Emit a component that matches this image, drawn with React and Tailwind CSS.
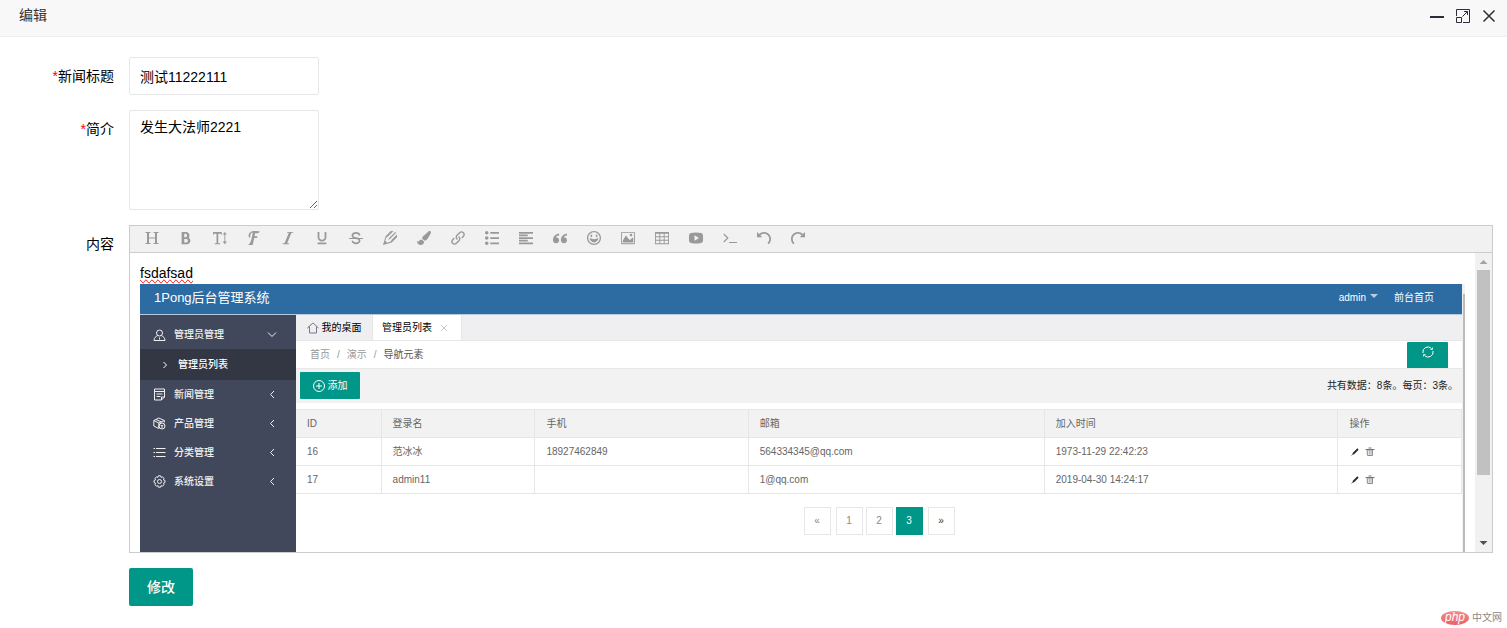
// Edit dialog for a news item: title, summary and rich text content

import { useState } from 'react';
import { FaPaintBrush } from 'react-icons/fa';
import {
  ImBold,
  ImFont,
  ImHappy,
  ImImage,
  ImItalic,
  ImLink,
  ImList2,
  ImParagraphLeft,
  ImPencil2,
  ImQuotesLeft,
  ImRedo,
  ImStrikethrough,
  ImTable2,
  ImTextHeight,
  ImUnderline,
  ImUndo,
} from 'react-icons/im';

// Base wrapper for the thin outline icons
const Icon = ({ size = 14, children, className, strokeWidth = 1, viewBox }) => (
  <svg
    width={size}
    height={size}
    viewBox={viewBox || `0 0 ${size} ${size}`}
    fill="none"
    stroke="currentColor"
    strokeWidth={strokeWidth}
    className={className}
    aria-hidden="true"
  >
    {children}
  </svg>
);

const MinimizeIcon = () => (
  <Icon strokeWidth={2}>
    <path d="M0 8h14" />
  </Icon>
);

const MaximizeIcon = () => (
  <Icon>
    <path d="M0.5 7V0.5H13.5V13.5H7" />
    <path d="M0.5 8.5h5v5h-5zM6.5 7.5l5-5M8 2.5h3.5V6" />
  </Icon>
);

const CloseIcon = () => (
  <Icon strokeWidth={1.5}>
    <path d="M1.5 1.5l11 11M12.5 1.5l-11 11" />
  </Icon>
);

const HeaderIcon = () => (
  <Icon strokeWidth={1}>
    <path d="M0.5 1.5h5M8.5 1.5h5M0.5 12.5h5M8.5 12.5h5M3 7h8" />
    <path d="M3 1.5v11M11 1.5v11" strokeWidth={2} />
  </Icon>
);

const VideoIcon = () => (
  <Icon>
    <path
      d="M2 2Q7 1 12 2Q14 2.2 14 4.5V9.5Q14 11.8 12 12Q7 13 2 12Q0 11.8 0 9.5V4.5Q0 2.2 2 2zM5.5 4.2v5.6L10 7z"
      fill="currentColor"
      fillRule="evenodd"
      stroke="none"
    />
  </Icon>
);

const TerminalIcon = () => (
  <Icon>
    <path d="M0.8 3l4 4-4 4M6 11.5h8" strokeWidth={1.2} />
  </Icon>
);

const UserIcon = () => (
  <Icon size={13}>
    <circle cx="6.5" cy="4" r="3" />
    <path d="M4.8 6.5C2.5 7.5 1 9 1 11.5h11C12 9 10.5 7.5 8.2 6.5M6.5 8.500v2" />
  </Icon>
);

const NewsIcon = () => (
  <Icon size={13}>
    <path d="M1.5 1h10v8l-3 3h-7zM1.5 3.5h10M3.5 6h6M3.5 8.5h4M8.5 12V9h3" />
  </Icon>
);

const ProductIcon = () => (
  <Icon size={13}>
    <path d="M0.8 3.5l5-2.5 5.5 2.5v2M0.8 3.5l5 2.5 5.5-2.5M0.8 3.5v5.5l5 2.5V6M3 2.5l5.5 2.5" />
    <circle cx="9" cy="9" r="3" />
    <path d="M7.5 8l1.5 1 1.5-1M9 9v2" />
  </Icon>
);

const CategoryIcon = () => (
  <Icon size={13}>
    <path d="M0.5 2.5h1.5M3 2.5h9.5M0.5 6.5h1.5M3 6.5h9.5M0.5 10.5h1.5M3 10.5h9.5" />
  </Icon>
);

const SettingsIcon = () => (
  <Icon size={13}>
    <circle cx="6.5" cy="6.5" r="2" />
    <path d="M5.5 0.8h2l0.5 1.5 1.5-0.5 1.5 1.5-0.6 1.5 1.6 0.7v2l-1.6 0.7 0.6 1.5-1.5 1.5-1.5-0.5-0.5 1.5h-2L5 10.7l-1.5 0.5L2 9.7l0.6-1.5L1 7.5v-2l1.6-0.7L2 3.3l1.5-1.5 1.5 0.5z" />
  </Icon>
);

const HomeIcon = () => (
  <Icon size={12}>
    <path d="M0.5 6L6 1l5.5 5M2.5 4.5v6.500h7V4.5" stroke="#77778f" />
    <path d="M0.5 6L6 1" stroke="#c77b7b" />
  </Icon>
);

const AddIcon = () => (
  <Icon size={12}>
    <circle cx="6" cy="6" r="5.5" />
    <path d="M6 3v6M3 6h6" />
  </Icon>
);

const RefreshIcon = () => (
  <Icon size={12}>
    <path d="M1 7A5 5 0 0 1 9.5 2.5M11 5a5 5 0 0 1-8.500 4.500" />
    <path d="M8.5 3.500h2V1.500M3.500 8.500h-2V10.500" strokeWidth={0.8} />
  </Icon>
);

const PencilIcon = () => (
  <Icon size={10} strokeWidth={1.8}>
    <path d="M3 7L8 2" stroke="#222a44" />
    <path d="M1.5 8.5L3 7" stroke="#9a6a50" strokeWidth={1} />
  </Icon>
);

const TrashIcon = () => (
  <Icon size={10}>
    <path d="M2.5 3h5v5.5h-5z" fill="#dbe9f3" stroke="#8d8d8d" />
    <path d="M0.5 2.5h9M3.5 1h3" stroke="#77776f" />
    <path d="M4.5 4v3.5M6 4v3.5" stroke="#8fa9bc" strokeWidth={0.7} />
    <path d="M2 3v5" stroke="#d8bd84" strokeWidth={0.8} />
  </Icon>
);

const ChevronIcon = ({ d }) => (
  <Icon size={10}>
    <path d={d} />
  </Icon>
);

const CHEVRON_DOWN = 'M1 2.5l4 4 4-4';
const CHEVRON_LEFT = 'M7 1L3.500 4.500L7 8';
const CHEVRON_RIGHT = 'M3.5 2l3 3-3 3';

const TOOLS = [
  { name: '标题', Glyph: HeaderIcon },
  { name: '粗体', Glyph: ImBold },
  { name: '字号', Glyph: ImTextHeight },
  { name: '字体', Glyph: ImFont },
  { name: '斜体', Glyph: ImItalic },
  { name: '下划线', Glyph: ImUnderline },
  { name: '删除线', Glyph: ImStrikethrough },
  { name: '文字颜色', Glyph: ImPencil2 },
  { name: '背景色', Glyph: FaPaintBrush },
  { name: '链接', Glyph: ImLink },
  { name: '列表', Glyph: ImList2 },
  { name: '对齐', Glyph: ImParagraphLeft },
  { name: '引用', Glyph: ImQuotesLeft },
  { name: '表情', Glyph: ImHappy },
  { name: '图片', Glyph: ImImage },
  { name: '表格', Glyph: ImTable2 },
  { name: '视频', Glyph: VideoIcon },
  { name: '代码', Glyph: TerminalIcon },
  { name: '撤销', Glyph: ImUndo },
  { name: '重做', Glyph: ImRedo },
];

const MENU = [
  { label: '新闻管理', Glyph: NewsIcon },
  { label: '产品管理', Glyph: ProductIcon },
  { label: '分类管理', Glyph: CategoryIcon },
  { label: '系统设置', Glyph: SettingsIcon },
];

const COLUMNS = [
  { label: 'ID', width: 'w-[7.3%]' },
  { label: '登录名', width: 'w-[13.2%]' },
  { label: '手机', width: 'w-[18.3%]' },
  { label: '邮箱', width: 'w-[25.4%]' },
  { label: '加入时间', width: 'w-[25.2%]' },
  { label: '操作', width: '' },
];

const ROWS = [
  ['16', '范冰冰', '18927462849', '564334345@qq.com', '1973-11-29 22:42:23'],
  ['17', 'admin11', '', '1@qq.com', '2019-04-30 14:24:17'],
];

const TitleBar = () => (
  <header className="flex h-[37px] items-start justify-between border-b border-[#eeeeee] bg-[#f8f8f8] pr-[11px] pl-[19px] text-[#333333]">
    <h1 className="pt-[5px] leading-5">编辑</h1>
    <div className="flex gap-3 pt-[9px] text-[#2d2c3b]">
      <button type="button" aria-label="最小化"><MinimizeIcon /></button>
      <button type="button" aria-label="最大化"><MaximizeIcon /></button>
      <button type="button" aria-label="关闭"><CloseIcon /></button>
    </div>
  </header>
);

const FormRow = ({ id, label, required, children }) => (
  <div className="flex items-start gap-[15px]">
    <label htmlFor={id} className="w-[114px] shrink-0 py-[9px] text-right leading-5">
      {required && <span className="text-[#ff0000]">*</span>}
      {label}
    </label>
    {children}
  </div>
);

const Toolbar = () => (
  <div className="flex h-[27px] border-b border-[#cccccc] bg-[#f1f1f1] pb-[2px] pl-[5px] text-[#999999]">
    {TOOLS.map(({ name, Glyph }) => (
      <button
        key={name}
        type="button"
        aria-label={name}
        className="flex w-[34px] items-center justify-center text-sm"
      >
        <Glyph />
      </button>
    ))}
  </div>
);

const Sidebar = () => (
  <nav className="w-[156px] shrink-0 bg-[#42485b] font-medium text-white">
    <button type="button" className="flex h-[34px] w-full items-center pt-[6px] pr-[19px] pl-[13px] text-[#f0f0f0]">
      <UserIcon />
      <span className="ml-2 grow text-left">管理员管理</span>
      <ChevronIcon d={CHEVRON_DOWN} />
    </button>
    <a href="#list" className="flex h-[31px] items-center gap-2 bg-[#333744] pl-5">
      <ChevronIcon d={CHEVRON_RIGHT} />
      管理员列表
    </a>
    {MENU.map(({ label, Glyph }) => (
      <button key={label} type="button" className="flex h-[29px] w-full items-center pr-[19px] pl-[13px] text-[#f0f0f0]">
        <Glyph />
        <span className="ml-2 grow text-left">{label}</span>
        <ChevronIcon d={CHEVRON_LEFT} />
      </button>
    ))}
  </nav>
);

const AdminTable = () => (
  <table className="w-full table-fixed border-collapse text-left text-[#666666]">
    <thead className="bg-[#f2f2f2]">
      <tr className="h-7">
        {COLUMNS.map(col => (
          <th
            key={col.label}
            className={`border border-l-0 border-[#e6e6e6] px-[11px] font-normal ${col.width}`}
          >
            {col.label}
          </th>
        ))}
      </tr>
    </thead>
    <tbody>
      {ROWS.map(row => (
        <tr key={row[0]} className="h-7">
          {row.map((cell, i) => (
            <td key={i} className="border border-l-0 border-[#e6e6e6] px-[11px]">{cell}</td>
          ))}
          <td className="border border-l-0 border-[#e6e6e6] px-[12px]">
            <div className="flex gap-[5px]">
              <button type="button" aria-label="编辑"><PencilIcon /></button>
              <button type="button" aria-label="删除"><TrashIcon /></button>
            </div>
          </td>
        </tr>
      ))}
    </tbody>
  </table>
);

const Pagination = () => (
  <div className="mt-[13px] flex justify-center gap-[3px] text-[#888888]">
    <a href="#prev" className="mr-[2px] flex h-7 w-[27px] items-center justify-center border border-[#e6e6e6]">«</a>
    <a href="#1" className="flex h-7 w-[27px] items-center justify-center border border-[#e6e6e6]">1</a>
    <a href="#2" className="flex h-7 w-[27px] items-center justify-center border border-[#e6e6e6]">2</a>
    <a href="#3" className="flex h-7 w-[27px] items-center justify-center bg-[#009688] text-white">3</a>
    <a href="#next" className="ml-[2px] flex h-7 w-[27px] items-center justify-center border border-[#e6e6e6] text-[#333333]">»</a>
  </div>
);

// The admin page that is embedded in the article body
const AdminPage = () => (
  <div className="flex h-[340px] text-[10px] leading-4">
    <div className="flex min-w-0 grow flex-col">
      <div className="flex h-[31px] shrink-0 items-center border-b border-[#b5c9dc] bg-[#2d6ca2] pr-7 pb-[3px] pl-[14px] text-white">
        <span className="grow text-[13px]">1Pong后台管理系统</span>
        <button type="button" className="mr-4 flex items-center gap-1">
          admin
          <svg width="8" height="4" viewBox="0 0 8 4" className="mb-[3px]" aria-hidden="true">
            <path d="M0 0h8L4 4z" fill="#b9cde0" />
          </svg>
        </button>
        <a href="#front">前台首页</a>
      </div>
      <div className="flex grow">
        <Sidebar />
        <div className="min-w-0 grow bg-white">
          <div className="flex h-[25px] bg-[#efeef0] text-black">
            <button type="button" className="flex w-[76px] items-center justify-center gap-[3px]">
              <HomeIcon />
              我的桌面
            </button>
            <button type="button" className="flex w-[90px] items-center justify-center gap-2 border-x border-[#e6e6e6] bg-white pr-1">
              管理员列表
              <Icon size={8} className="text-[#c4c4c4]">
                <path d="M1 1l6 6M7 1L1 7" />
              </Icon>
            </button>
          </div>
          <div className="flex h-[28px] items-center border-t border-[#e6e6e6] pr-[14px] pl-[14px] text-[#999999]">
            <div className="flex grow gap-[7px]">
              <a href="#home">首页</a>
              <span>/</span>
              <a href="#demo">演示</a>
              <span>/</span>
              <span className="text-[#555555]">导航元素</span>
            </div>
            <button
              type="button"
              aria-label="刷新"
              className="flex h-[26px] w-[41px] justify-center self-end rounded-t-[1px] bg-[#009688] pt-1 text-white"
            >
              <RefreshIcon />
            </button>
          </div>
          <div className="mb-[6px] flex h-[35px] items-center justify-between border-t border-[#e8e8e8] bg-[#f2f2f2] px-1 pb-px">
            <button
              type="button"
              className="flex h-[27px] w-[60px] items-center justify-center gap-[3px] rounded-[1px] bg-[#009688] text-white"
            >
              <AddIcon />
              添加
            </button>
            <span className="text-[#222222]">共有数据：8条。每页：3条。</span>
          </div>
          <AdminTable />
          <Pagination />
        </div>
      </div>
    </div>
    <div className="w-[3px] shrink-0 border-t-[10px] border-l border-[#f0f0f0] bg-[#bbbbbb]" />
  </div>
);

const ScrollTrack = () => (
  <div className="flex w-[17px] shrink-0 flex-col items-center bg-[#f1f1f1]" aria-hidden="true">
    <svg width="17" height="17" viewBox="0 0 17 17">
      <path d="M4.5 11h8l-4-4z" fill="#a3a3a3" />
    </svg>
    <div className="h-[205px] w-[13px] bg-[#c1c1c1]" />
    <svg width="17" height="17" viewBox="0 0 17 17" className="mt-auto">
      <path d="M4.5 6h8l-4 4z" fill="#505050" />
    </svg>
  </div>
);

const Editor = () => (
  <div className="min-w-0 grow border border-[#cccccc]">
    <Toolbar />
    <div className="flex h-[299px] overflow-hidden">
      <div className="min-w-0 grow overflow-hidden px-[10px] pt-[10px]">
        <p className="mb-px leading-5">
          <span className="[text-decoration-line:spelling-error]">fsdafsad</span>
        </p>
        <AdminPage />
      </div>
      <ScrollTrack />
    </div>
  </div>
);

const SiteMark = () => (
  <div className="absolute right-[5px] bottom-[2px] flex items-center gap-[3px] text-[10px] leading-4 text-[#888888]">
    <span className="flex h-[14px] w-7 items-center justify-center rounded-[50%] bg-linear-to-b from-[#f08d8f] to-[#ec5f66] pb-[2px] text-[12px] text-white italic">
      php
    </span>
    中文网
  </div>
);

const App = () => {
  const [title, setTitle] = useState('测试11222111');
  const [summary, setSummary] = useState('发生大法师2221');

  return (
    <div className="relative min-h-screen bg-white font-['Liberation_Sans','Noto_Sans_CJK_SC',sans-serif] text-sm text-black">
      <TitleBar />
      <form className="flex flex-col gap-[15px] pt-5 pr-[14px]" onSubmit={e => e.preventDefault()}>
        <FormRow id="title" label="新闻标题" required>
          <input
            id="title"
            type="text"
            value={title}
            onChange={e => setTitle(e.target.value)}
            className="h-[38px] w-[190px] rounded-xs border border-[#e6e6e6] px-[10px]"
          />
        </FormRow>
        <FormRow id="summary" label="简介" required>
          <textarea
            id="summary"
            value={summary}
            onChange={e => setSummary(e.target.value)}
            className="h-[100px] w-[190px] resize rounded-xs border border-[#e6e6e6] px-[10px] py-[6px] leading-5"
          />
        </FormRow>
        <FormRow label="内容">
          <Editor />
        </FormRow>
        <div className="pl-[129px]">
          <button type="submit" className="h-[38px] rounded-xs bg-[#009688] px-[18px] font-medium text-white">
            修改
          </button>
        </div>
      </form>
      <SiteMark />
    </div>
  );
};

export default App;
